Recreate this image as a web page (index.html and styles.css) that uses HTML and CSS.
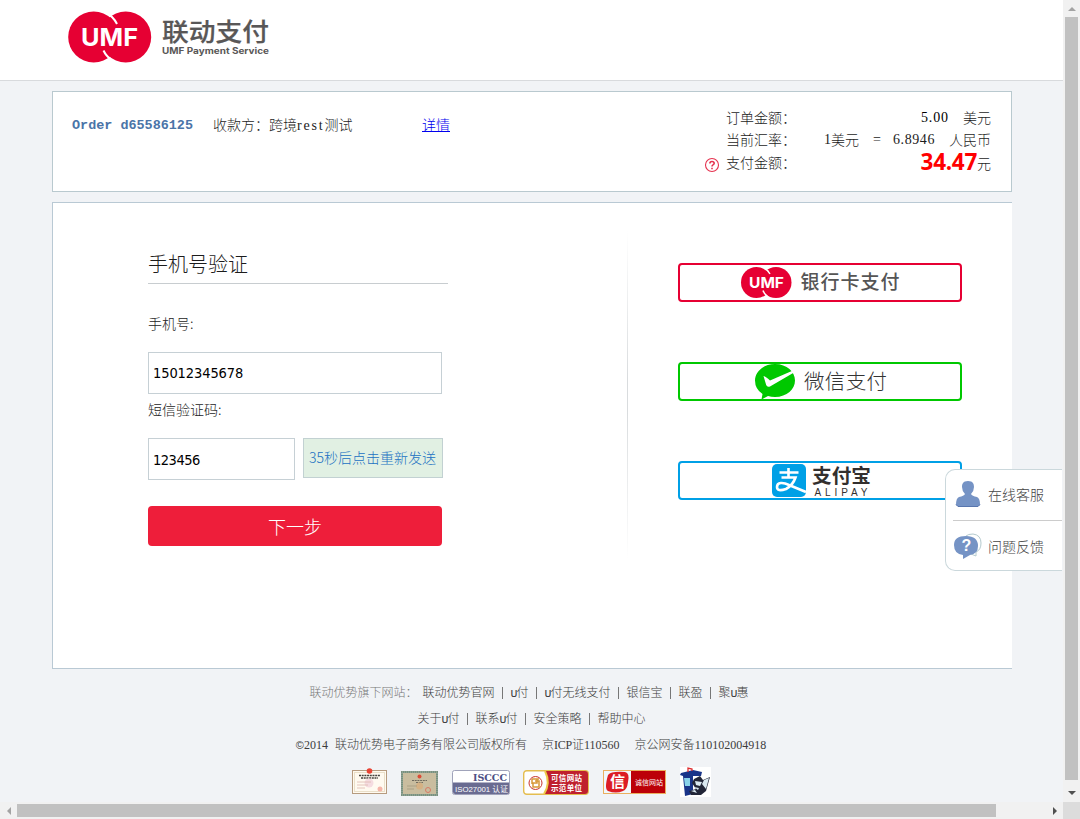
FILE: index.html
```html
<!DOCTYPE html>
<html lang="zh-CN">
<head>
<meta charset="utf-8">
<title>联动支付</title>
<link rel="stylesheet" href="styles.css">
</head>
<body>
<div class="window">
  <div class="page">
    <header class="header">
      <svg class="brand" width="210" height="56" viewBox="0 0 210 56">
        <circle cx="25.700" cy="29" r="25.500" fill="#e60033"/>
        <circle cx="57.700" cy="29" r="25.500" fill="#e60033"/>
        <path d="M37 4Q45 8 49 16M35.500 42.500Q38 48 44 52.500" fill="none" stroke="#fff" stroke-width="2"/>
        <text class="brand-umf" x="13" y="37.500" textLength="57" lengthAdjust="spacingAndGlyphs">UMF</text>
        <text class="brand-cn" x="94" y="33" textLength="107" lengthAdjust="spacingAndGlyphs">联动支付</text>
        <text class="brand-en" x="94" y="45.500" textLength="107" lengthAdjust="spacingAndGlyphs">UMF Payment Service</text>
      </svg>
    </header>

    <section class="order">
      <div class="order-info">
        <b class="order-no">Order d65586125</b>
        <span class="payee">收款方：跨境<span class="latin">rest</span>测试</span>
        <a class="detail" href="#">详情</a>
      </div>
      <div class="amounts">
        <div class="amount-row"><span>订单金额：</span><span class="value"><i class="l14 dark price">5.00</i><i class="unit">美元</i></span></div>
        <div class="amount-row"><span>当前汇率：</span><span class="value"><i class="l14">1</i>美元<i class="l14 eq">=</i><i class="l14 rate">6.8946</i><i class="unit">人民币</i></span></div>
        <div class="amount-row pay">
          <svg class="help" width="16" height="16" viewBox="0 0 16 16"><circle cx="8" cy="8" r="6.500" fill="none" stroke="#e5324f" stroke-width="1.100"/><path d="M5.900 6.500Q5.900 4.500 8 4.500T10.200 6.300Q10.200 7.300 9 7.900Q8 8.400 8 9.600M8 10.800V12.200" fill="none" stroke="#e5324f" stroke-width="1.600"/></svg>
          <span>支付金额：</span><span class="value"><b class="total">34.47</b><span class="yuan">元</span></span>
        </div>
      </div>
    </section>

    <main class="main">
      <form class="verify">
        <h1 class="title">手机号验证</h1>
        <label class="label" for="phone">手机号:</label>
        <input class="field" id="phone" value="15012345678">
        <label class="label code-label" for="code">短信验证码:</label>
        <div class="code-row">
          <input class="field code" id="code" value="123456">
          <button class="resend" type="button">35秒后点击重新发送</button>
        </div>
        <button class="next" type="button">下一步</button>
      </form>
      <div class="divider"></div>
      <div class="methods">
        <a class="method bank"><svg width="280" height="35" viewBox="0 0 280 35">
          <circle cx="76.500" cy="17.500" r="15.500" fill="#e60033"/><circle cx="96" cy="17.500" r="15.500" fill="#e60033"/>
          <path d="M84 3Q88 5 90 9M83 25.500Q84 29 88 32" fill="none" stroke="#fff" stroke-width="1.400"/>
          <text class="bank-umf" x="69" y="22.500" textLength="35" lengthAdjust="spacingAndGlyphs">UMF</text>
          <text class="bank-name" x="120.500" y="24" textLength="99">银行卡支付</text>
        </svg></a>
        <a class="method wechat"><svg width="280" height="37" viewBox="0 0 280 37">
          <path d="M95 0C107 0 115 8 115 16.500S107 33 95 33Q91 33 88 32L81.500 35.500L82.500 30Q75 25 75 16.500C75 8 83 0 95 0Z" fill="#00c800"/>
          <path d="M83.500 12Q86 12.500 90 16.500L113 6.500L114 8.500L90 22.500Q87 23.500 86.200 21Z" fill="#fff"/>
          <text class="wechat-name" x="124" y="25" textLength="83">微信支付</text>
        </svg></a>
        <a class="method alipay"><svg width="280" height="35" viewBox="0 0 280 35">
          <rect x="92" y="1" width="34" height="33" rx="5" fill="#00a0e6"/>
          <path d="M108.500 5V14M99.500 9.500H118.500M101.500 14.500H115.500Q113 22 106 26Q97 29 97 24C97 19 103 19 109 22L126 29" fill="none" stroke="#fff" stroke-width="2.600"/>
          <text class="alipay-name" x="132" y="20" textLength="59" lengthAdjust="spacingAndGlyphs">支付宝</text>
          <text class="alipay-en" x="134.500" y="33" textLength="53">ALIPAY</text>
        </svg></a>
      </div>
    </main>

    <footer class="footer">
      <div class="links"><span class="sites">联动优势旗下网站：</span><a>联动优势官网</a><i class="sep"></i><a><span class="u">U</span>付</a><i class="sep"></i><a><span class="u">U</span>付无线支付</a><i class="sep"></i><a>银信宝</a><i class="sep"></i><a>联盈</a><i class="sep"></i><a>聚<span class="u">U</span>惠</a></div>
      <div class="links"><a>关于<span class="u">U</span>付</a><i class="sep"></i><a>联系<span class="u">U</span>付</a><i class="sep"></i><a>安全策略</a><i class="sep"></i><a>帮助中心</a></div>
      <div class="links legal"><span><span class="copy">©</span><span class="l12 year">2014</span>联动优势电子商务有限公司版权所有</span><span>京<span class="l12 icp">ICP</span>证<span class="l12">110560</span></span><span>京公网安备<span class="l12">110102004918</span></span></div>
      <div class="badges">
        <svg class="b1" width="35" height="27" viewBox="0 0 35 27"><rect x=".5" y="2.500" width="34" height="23" fill="#fffaf0" stroke="#b69b7f"/><rect x="2.500" y="4.500" width="30" height="19" fill="none" stroke="#eadfc9"/><circle cx="17.500" cy="3" r="2.800" fill="#e84334"/><path d="M7 7.500H28M9 10H26" stroke="#45413c" stroke-width="1.300" stroke-dasharray="2 .7"/><circle cx="17" cy="15" r="4.500" fill="#f5dce0"/><path d="M5 14H19M5 17H16M5 20H13" stroke="#ddb8ae" stroke-width=".8"/><circle cx="28" cy="21" r="2.500" fill="#f5b5a8"/></svg>
        <svg class="b2" width="37" height="25" viewBox="0 0 37 25"><rect x="1" y="1" width="35" height="23" fill="#c9bd9f" stroke="#789080" stroke-width="2"/><rect x="1" y="1" width="35" height="23" fill="none" stroke="#a3b3a0" stroke-dasharray="1 1"/><circle cx="18.500" cy="5.500" r="2" fill="#db4c36"/><path d="M11 9.500H26M15 11.500H22" stroke="#706b5e" stroke-dasharray="2 .7"/><circle cx="18.500" cy="15" r="3.500" fill="#d5b184"/><path d="M6 15H16M6 18H13" stroke="#9f967d" stroke-width=".7"/><circle cx="27" cy="19" r="2.500" fill="none" stroke="#d77b65"/></svg>
        <svg class="b3" width="58" height="26" viewBox="0 0 58 26"><rect x=".5" y=".5" width="57" height="24" rx="2" fill="#fff" stroke="#a0a3ba"/><path d="M1 12.500H57V23Q57 24 55 24H3Q1 24 1 22Z" fill="#696b91"/><text class="isccc" x="21" y="10.500" textLength="34" lengthAdjust="spacingAndGlyphs">ISCCC</text><text class="iso" x="3" y="21.500" textLength="53" lengthAdjust="spacingAndGlyphs">ISO27001 认证</text></svg>
        <svg class="b4" width="66" height="26" viewBox="0 0 66 26"><rect x=".7" y=".7" width="64.600" height="23.600" rx="3" fill="#fff" stroke="#e4bd50" stroke-width="1.400"/><path d="M22 1H62Q65 1 65 4V21Q65 24 62 24H21Q28 13 22 1Z" fill="#bf202d"/><path d="M22 1Q28 13 21 24" fill="none" stroke="#edca4b" stroke-width="2"/><circle cx="12.500" cy="13" r="6.500" fill="none" stroke="#c83530"/><path d="M9 9H14V13H10V17H16V11H12M9 9V14M14 9H16" fill="none" stroke="#d79838" stroke-width="1.500"/><text class="badge-text" x="28" y="10.500" textLength="31">可信网站</text><text class="badge-text" x="28" y="20.500" textLength="31">示范单位</text></svg>
        <svg class="b5" width="63" height="25" viewBox="0 0 63 25"><rect x=".5" y=".5" width="62" height="23" fill="#f1f7fb" stroke="#eaaf60"/><rect x="28" y="1" width="34" height="22" fill="#bc0008"/><path d="M5 5Q8 1 22 2Q27 3 25 12Q24 20 20 21Q13 24 5 21Q1 19 5 5Z" fill="#dc1c24"/><text class="seal" x="7" y="17">信</text><text class="badge-text plain" x="32" y="14.500" textLength="28">诚信网站</text></svg>
        <svg class="b6" width="31" height="30" viewBox="0 0 31 30"><rect width="31" height="30" fill="#fff"/><path d="M0 8L1 6L13 3L22 5L21 9H13V27L5 29L3 9Z" fill="#193489"/><path d="M4 11H10V19H5Z" fill="#8ad3ea"/><path d="M8 5V1L12 2V4" fill="none" stroke="#de2b2d" stroke-width="1.300"/><path d="M14 12L20 9L23 13L30 10L26 24L21 28H11L9 24L16 22L12 16Z" fill="#222638"/><path d="M15 14L22 15L20 19L16 18ZM22 17L24 13L29 11L26 22ZM11 24L15 23L17 26ZM14 20L19 21L18 23Z" fill="#dae9f1"/></svg>
      </div>
    </footer>

    <aside class="support">
      <a class="support-item"><svg width="30" height="30" viewBox="0 0 30 30"><path d="M15 1C20 1 21 4 21 7Q21 11 18 14Q19 16 24 17Q27 18 27 25L25 26.500H5L3 25Q3 18 6 17Q11 16 12 14Q9 11 9 7C9 4 10 1 15 1Z" fill="#7593c5"/><path d="M3 24.500L5 26.500H25L27 24.500" fill="none" stroke="#5876ae"/></svg><span class="service">在线客服</span></a>
      <a class="support-item"><svg width="30" height="30" viewBox="0 0 30 30"><path d="M13 4Q15 2 20 2Q28 3 28 11Q28 18 23 20V24L18 22" fill="#fff" stroke="#b4cace"/><path d="M13 4Q25 4 25 14Q25 22 17 23L10 27V23Q1 22 1 13Q1 4 13 4Z" fill="#7593c5"/><text class="q" x="8.500" y="19">?</text></svg><span>问题反馈</span></a>
    </aside>
  </div>
  <div class="vbar"><i class="arrow up"></i><i class="vthumb"></i><i class="arrow down"></i></div>
  <div class="hbar"><i class="arrow left"></i><i class="hthumb"></i><i class="arrow right"></i></div>
  <div class="corner"></div>
</div>
</body>
</html>
```

FILE: styles.css
```css
* { box-sizing: border-box; }
body { margin: 0; overflow: hidden; font: 14px "Noto Sans CJK SC", sans-serif; font-weight: 300; color: #1c1c1c; }
i { font-style: normal; }
svg { display: block; flex: none; }
.window { width: 1080px; height: 819px; display: grid; grid-template-columns: 1063px 17px; grid-template-rows: 802px 17px; }
.page { position: relative; overflow: hidden; background: #f1f3f6; }
.l14 { font-family: "Liberation Serif", serif; font-size: 14px; }
.l12 { font-family: "Liberation Serif", serif; font-size: 12px; }
.u { font-family: "Liberation Mono", monospace; font-size: 11.500px; letter-spacing: -.9px; }
.latin { font-family: "Liberation Serif", serif; font-size: 14px; letter-spacing: 1.8px; }
.price { letter-spacing: .88px; }
.rate { letter-spacing: .58px; }
.icp { letter-spacing: -.2px; }

.header { height: 81px; background: #fff; border-bottom: 1px solid #d8dadd; padding: 8px 0 0 68px; }
.brand-umf { font: bold 24px Inter, sans-serif; fill: #fff; }
.brand-cn { font: 500 25px "Noto Sans CJK SC", sans-serif; fill: #595757; stroke: #595757; stroke-width: .2; }
.brand-en { font: bold 9px Inter, sans-serif; fill: #595757; }

.order { width: 960px; height: 101px; margin: 10px 0 0 52px; background: #fff; border: 1px solid #b9c9cf; display: flex; justify-content: space-between; }
.order-info { display: flex; padding: 22px 0 0 19px; line-height: 20px; white-space: nowrap; }
.order-no { width: 141px; padding-top: 2px; color: #4a74a8; font: bold 13.45px/20px "Liberation Mono", monospace; }
.payee { width: 209px; }
.detail { height: 20px; color: #00e; }
.amounts { width: 287px; padding-top: 14px; margin-right: 20px; }
.amount-row { display: flex; height: 22px; line-height: 22px; padding-left: 22px; white-space: nowrap; }
.value { margin-left: auto; display: flex; }
.value .l14 { padding-top: 2px; line-height: 20px; }
.unit { margin-left: 14px; }
.eq { margin: 0 12px 0 14px; }
.dark { color: #000; }
.pay { padding-left: 0; height: 24px; line-height: 24px; }
.help { margin: 7px 6px 0 0; }
.total { font: bold 22.500px/24px "Open Sans", sans-serif; letter-spacing: -.3px; color: #f00; }
.yuan { padding-top: 1px; }

.main { width: 960px; height: 467px; margin: 10px 0 0 52px; background: #fff; border: 1px solid #b9c9d4; border-right: 0; display: flex; }
.verify { width: 574px; padding: 46px 0 0 95px; }
.title { margin: 0; width: 300px; height: 35px; border-bottom: 1px solid #c8cdd0; font-size: 20px; font-weight: 300; line-height: 30px; }
.label { display: block; height: 68px; padding-top: 29px; line-height: 20px; }
.code-label { height: 44px; padding-top: 5px; }
.field { display: block; width: 294px; height: 42px; border: 1px solid #c6d0d5; padding: 0 4px; font: 14.500px "DejaVu Sans Condensed", sans-serif; letter-spacing: -.1px; color: #000; background: #fff; }
.code-row { display: flex; gap: 8px; height: 68px; align-items: flex-start; }
.code { width: 147px; padding-top: 1px; letter-spacing: -.5px; }
.resend { width: 140px; height: 40px; border: 1px solid #c2d1d2; background: #e1f0e3; padding: 0 1px 2px 0; font: 300 14px "Noto Sans CJK SC", sans-serif; color: #2070c2; white-space: nowrap; }
.next { display: block; width: 294px; height: 40px; border: 0; border-radius: 4px; background: #ee1e3a; color: #fff; font: 300 18px "Noto Sans CJK SC", sans-serif; padding: 0; }
.divider { width: 1px; height: 330px; margin-top: 27px; background: linear-gradient(#fff, #d9dcde 45%, #d9dcde 55%, #fff); }
.methods { display: flex; flex-direction: column; gap: 60px; padding: 60px 0 0 50px; }
.method { width: 284px; height: 39px; border: 2px solid #e60033; border-radius: 4px; overflow: hidden; }
.wechat { border-color: #00c800; }
.alipay { border-color: #00a0e6; }
.bank-umf { font: bold 15px Inter, sans-serif; fill: #fff; }
.bank-name { font: 500 19px "Noto Sans CJK SC", sans-serif; fill: #555; }
.wechat-name { font: 300 20.500px "Noto Sans CJK SC", sans-serif; fill: #333; }
.alipay-name { font: bold 19px "Noto Sans CJK SC", sans-serif; fill: #332f2e; }
.alipay-en { font: 10px "Liberation Sans", sans-serif; fill: #332f2e; }

.footer { width: 1063px; padding-top: 10px; font-size: 12px; color: #3c3c3c; display: flex; flex-direction: column; align-items: center; }
.links { display: flex; height: 26px; line-height: 26px; white-space: nowrap; }
.sites { width: 113px; color: #777; }
.links:first-child { margin-right: 5px; }
.sep { width: 1px; height: 12px; margin: 8px 7.500px 0; background: #777; }
.legal { gap: 15px; margin-right: 1px; }
.copy { font: 11px "Liberation Sans", sans-serif; }
.year { margin-right: 7px; }
.badges { display: flex; align-self: flex-start; margin-left: 352px; padding-top: 10px; height: 42px; }
.b1 { margin: 1px 14px 0 0; }
.b2 { margin: 4px 14px 0 0; }
.b3 { margin: 3px 13px 0 0; }
.b4 { margin: 3px 14px 0 0; }
.b5 { margin: 3px 14px 0 0; }
.isccc { font: bold 9px "DejaVu Serif", serif; fill: #4d5185; }
.iso { font: 8px "Liberation Sans", "Noto Sans CJK SC", sans-serif; fill: #fff; }
.badge-text { font: bold 7.500px "Noto Sans CJK SC", sans-serif; fill: #fff; }
.plain { font-size: 7px; font-weight: 400; }
.seal { font: bold 15px "Noto Sans CJK SC", sans-serif; fill: #fff; }

.support { position: absolute; left: 945px; top: 469px; width: 117px; height: 102px; background: #fff; border: 1px solid #cbd8dc; border-right: 0; border-radius: 10px 0 0 10px; color: #444; padding-left: 7px; }
.support-item { display: flex; align-items: center; gap: 5px; height: 50px; }
.support-item span { padding-bottom: 1px; }
.support-item .service { padding-bottom: 3px; }
.support-item + .support-item { height: 51px; padding-top: 1px; border-top: 1px solid #ccc; }
.q { font: bold 16px "Liberation Sans", sans-serif; fill: #fff; }

.vbar, .hbar { background: #f1f1f1; display: flex; align-items: center; }
.vbar { flex-direction: column; }
.vthumb { width: 13px; height: 763px; background: #c1c1c1; }
.hthumb { width: 979px; height: 13px; background: #c1c1c1; }
.corner { background: #dcdcdc; }
.arrow { flex: none; width: 0; height: 0; border: 4px solid transparent; }
.up { border-bottom-color: #a3a3a3; margin: 3px 0 6px; }
.down { border-top-color: #505050; margin-top: 11px; }
.left { border-right-color: #a3a3a3; margin: 0 6px 0 3px; }
.right { border-left-color: #505050; margin-left: 57px; }
```
